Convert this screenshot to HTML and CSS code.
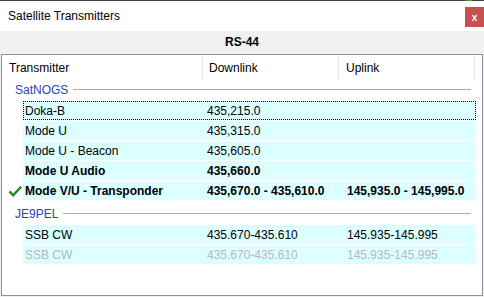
FILE: index.html
```html
<!DOCTYPE html>
<html lang="en">
<head>
  <meta charset="UTF-8">
  <title>Satellite Transmitters</title>
  <link rel="stylesheet" href="styles.css">
</head>
<body>

  <div class="edge"><span class="edge-green"></span></div>

  <div class="titlebar">
    <span class="title">Satellite Transmitters</span>
    <span class="close">x</span>
  </div>

  <div class="sat-name">RS-44</div>

  <div class="list">
    <div class="colhead">
      <div class="hcell first">Transmitter</div>
      <div class="hcell">Downlink</div>
      <div class="hcell last">Uplink</div>
    </div>

    <div class="group">
      <span class="group-label">SatNOGS</span>
      <span class="group-line"></span>
    </div>

    <div class="item">
      <div class="gutter"></div>
      <div class="cells focused">
        <span>Doka-B</span><span>435,215.0</span><span></span>
      </div>
    </div>
    <div class="item">
      <div class="gutter"></div>
      <div class="cells">
        <span>Mode U</span><span>435,315.0</span><span></span>
      </div>
    </div>
    <div class="item">
      <div class="gutter"></div>
      <div class="cells">
        <span>Mode U - Beacon</span><span>435,605.0</span><span></span>
      </div>
    </div>
    <div class="item">
      <div class="gutter"></div>
      <div class="cells bold">
        <span>Mode U Audio</span><span>435,660.0</span><span></span>
      </div>
    </div>
    <div class="item">
      <div class="gutter">
        <svg class="check" width="16" height="14" viewBox="0 0 16 14">
          <path d="M1.5 7.5 L5.5 11.5 L14 2.5" fill="none" stroke="#1f8c1f" stroke-width="2.6"/>
        </svg>
      </div>
      <div class="cells bold">
        <span>Mode V/U - Transponder</span><span>435,670.0 - 435,610.0</span><span>145,935.0 - 145,995.0</span>
      </div>
    </div>

    <div class="group second">
      <span class="group-label">JE9PEL</span>
      <span class="group-line"></span>
    </div>

    <div class="item">
      <div class="gutter"></div>
      <div class="cells">
        <span>SSB CW</span><span>435.670-435.610</span><span>145.935-145.995</span>
      </div>
    </div>
    <div class="item">
      <div class="gutter"></div>
      <div class="cells disabled">
        <span>SSB CW</span><span>435.670-435.610</span><span>145.935-145.995</span>
      </div>
    </div>
  </div>

</body>
</html>
```

FILE: styles.css
```css
body { margin: 0; width: 484px; height: 297px; overflow: hidden; background: #f0f0f0; font-family: "Liberation Sans", Arial, sans-serif; font-size: 12px; color: #000; }

.edge { height: 1px; background: #3f3f3f; position: relative; }
.edge-green { position: absolute; left: 466px; top: 0; width: 6px; height: 1px; background: #3a9a3a; }

.titlebar { height: 30px; background: #fff; display: flex; align-items: center; }
.title { padding-left: 8px; flex: 1; }
.close { align-self: flex-start; margin-top: 6px; width: 19px; height: 20px; background: #c75050; color: #fff; font-weight: bold; font-size: 10px; display: flex; align-items: center; justify-content: center; }

.sat-name { height: 23px; line-height: 23px; text-align: center; font-weight: bold; }

.list { margin: 0 1px; height: 240px; border: 1px solid #8d929b; background: #fff; }

.colhead { display: flex; height: 25px; }
.hcell { width: 136px; border-right: 1px solid #e5e5e5; padding-left: 6px; box-sizing: border-box; display: flex; align-items: center; margin: 1px 0 0; }
.hcell.first { width: 201px; padding-left: 7px; }
.hcell.last { padding-left: 7px; }

.group { display: flex; align-items: center; height: 19px; padding: 0 11px 2px 13px; }
.group.second { margin-top: 4px; }
.group-label { color: #1f46b4; }
.group-line { flex: 1; height: 1px; background: #a9adc9; margin-left: 5px; }

.item { display: flex; margin-bottom: 1px; }
.gutter { width: 21px; height: 19px; display: flex; align-items: center; justify-content: center; }
.check { margin-left: 6px; margin-top: 1px; }
.cells { width: 453px; height: 19px; background: #dcffff; display: grid; grid-template-columns: 182px 140px 1fr; align-items: center; box-sizing: border-box; }
.cells span { padding-left: 2px; white-space: nowrap; }
.cells.focused { outline: 1px dotted #000; outline-offset: -1px; }
.cells.bold { font-weight: bold; }
.cells.disabled { color: #b8b8b8; }
```
